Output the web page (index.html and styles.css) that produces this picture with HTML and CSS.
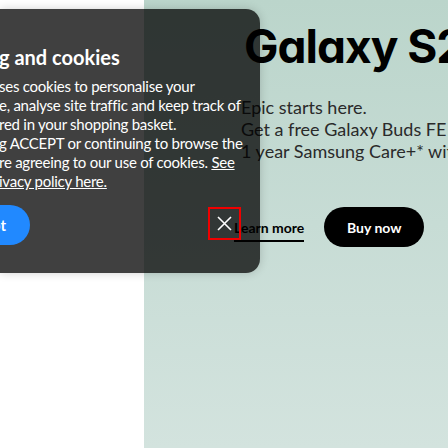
FILE: index.html
```html
<!DOCTYPE html>
<html lang="en">
<head>
<meta charset="utf-8">
<title>Samsung</title>
<link rel="stylesheet" href="styles.css">
</head>
<body>
<div class="page">
  <div class="side"></div>
  <main class="hero">
    <h1 class="hero-title">Galaxy S24 FE</h1>
    <p class="hero-text">Epic starts here.<br>Get a free Galaxy Buds FE (worth £99)<br>1 year Samsung Care+* with selected models</p>
    <div class="hero-actions">
      <a class="learn" href="#">Learn more</a>
      <a class="buy" href="#">Buy now</a>
    </div>
  </main>

  <section class="notice" aria-label="Cookie notice">
    <h2 class="notice-title">g and cookies</h2>
    <p class="notice-text">ses cookies to personalise your<br>e, analyse site traffic and keep track of<br>red in your shopping basket.<br>g ACCEPT or continuing to browse the<br>re agreeing to our use of cookies. <a href="#">See</a><br><a href="#">ivacy policy here.</a></p>
    <div class="notice-row">
      <span class="pill-btn">Accept</span>
      <span class="x-btn">
        <svg class="x-icon" width="15" height="15" viewBox="0 0 15 15" aria-hidden="true"><path d="M1 1 L14 14 M14 1 L1 14" stroke="#fff" stroke-width="1.6" fill="none"/></svg>
      </span>
    </div>
  </section>
</div>
</body>
</html>
```
FILE: styles.css
```css
html, body {
  margin: 0;
  padding: 0;
}
body {
  width: 448px;
  height: 448px;
  overflow: hidden;
  background: #fff;
  font-family: "Lato", "Noto Sans", sans-serif;
}
.page {
  position: relative;
  display: grid;
  grid-template-columns: 144px 1fr;
  height: 448px;
}
.side {
  background: #fff;
}
.hero {
  background: linear-gradient(180deg, #bbd5cb 0%, #c7dcd5 50%, #d3e3de 100%);
  padding: 16px 0 0 90px;
  overflow: hidden;
  white-space: nowrap;
}
.hero-title {
  margin: 0 0 0 10px;
  font-family: "Inter", sans-serif;
  font-feature-settings: "cv11" 1;
  font-weight: 700;
  font-size: 46px;
  line-height: 60px;
  letter-spacing: -1px;
  color: #000;
}
.hero-text {
  margin: 20px 0 0 7px;
  font-size: 18px;
  line-height: 22px;
  color: #2a2a2a;
}
.hero-actions {
  display: flex;
  align-items: center;
  gap: 20px;
  margin-top: 45px;
}
.learn {
  color: #000;
  font-weight: 700;
  font-size: 14px;
  text-decoration: none;
  border-bottom: 2px solid #000;
  padding-bottom: 4px;
  margin-top: 6px;
}
.buy {
  display: flex;
  align-items: center;
  justify-content: center;
  width: 100px;
  height: 40px;
  border-radius: 20px;
  background: #000;
  color: #fff;
  font-weight: 700;
  font-size: 14px;
  text-decoration: none;
}
.notice {
  position: absolute;
  z-index: 1;
  left: 0;
  top: 9px;
  width: 260px;
  height: 264px;
  box-sizing: border-box;
  padding: 36px 19px 0 0;
  background: rgba(0, 0, 0, 0.75);
  border-radius: 0 14px 14px 0;
  box-shadow: 0 0 10px rgba(0, 0, 0, 0.18);
  color: #fff;
  white-space: nowrap;
}
.notice-title {
  margin: 0 0 0 -1px;
  font-weight: 700;
  font-size: 20px;
  line-height: 25px;
}
.notice-text {
  margin: 7px 0 0 -1px;
  font-size: 15px;
  line-height: 19px;
  letter-spacing: -0.25px;
  color: #fff;
}
.notice-text a {
  color: #fff;
  text-decoration: underline;
}
.notice-row {
  display: flex;
  align-items: center;
  justify-content: space-between;
  height: 40px;
  margin-top: 14px;
}
.pill-btn {
  display: flex;
  align-items: center;
  justify-content: flex-end;
  flex: none;
  width: 100px;
  height: 40px;
  margin-left: -70px;
  padding-right: 24px;
  box-sizing: border-box;
  border-radius: 20px;
  background: #2189ff;
  color: #fff;
  font-weight: 700;
  font-size: 15px;
}
.x-btn {
  display: flex;
  align-items: center;
  justify-content: center;
  flex: none;
  width: 33px;
  height: 33px;
  margin-top: -3px;
  box-sizing: border-box;
  border: 2px solid #f00000;
}
.x-icon {
  display: block;
}
```
